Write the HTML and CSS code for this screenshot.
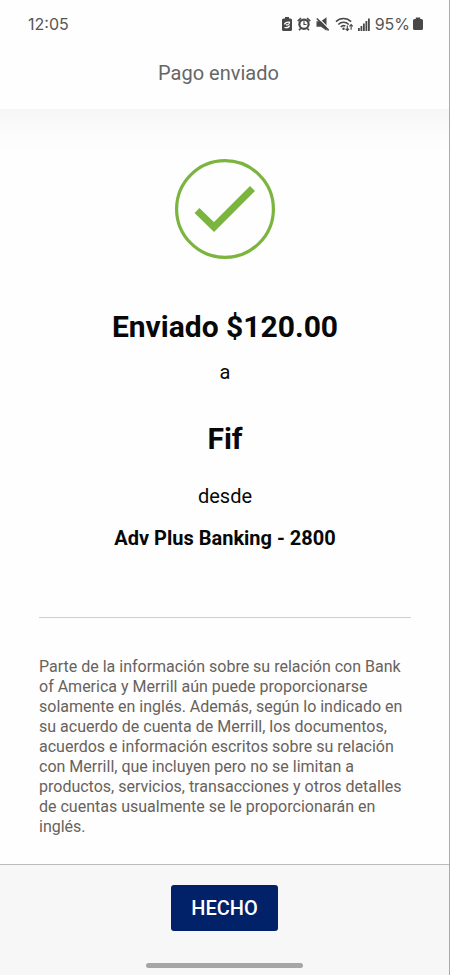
FILE: index.html
```html
<!DOCTYPE html>
<html lang="es">
<head>
<meta charset="utf-8">
<meta name="viewport" content="width=device-width, initial-scale=1">
<title>Pago enviado</title>
<link rel="stylesheet" href="styles.css">
</head>
<body>
<div class="screen">
  <div class="status">
    <time class="clock">12:05</time>
    <div class="indicators">
      <svg width="10" height="14" viewBox="0 0 10 14" aria-hidden="true"><path class="fill" d="M3 0h4v1.5h1.5A1.5 1.5 0 0 1 10 3v9.5a1.5 1.5 0 0 1-1.500 1.500h-7A1.500 1.500 0 0 1 0 12.500V3a1.500 1.500 0 0 1 1.500-1.500H3z"/><path class="cut" d="M2.500 7.500C3 5.500 5 5 7.500 5.200 7.500 7 6 8.300 4 7.800M7.500 8.500C7 10.300 5 11 2.500 10.500"/></svg>
      <svg width="14" height="14" viewBox="0 0 14 14" aria-hidden="true"><circle class="fill" cx="7" cy="7.300" r="5.700"/><path class="line" d="M.8 4.200 4 1.200M13.200 4.200 10 1.200M3.600 11.500 2 13.300M10.400 11.500 12 13.300"/><circle class="face" cx="7" cy="7.300" r="3.500"/><path class="arrow" d="M7 4.300v3.200h2.500"/></svg>
      <svg width="14" height="14" viewBox="0 0 14 14" aria-hidden="true"><path class="fill" d="M.5 4.200H5L10.500.3v13.400L5 9.800H.5z"/><path class="gap" d="M1.500.2 14 12.700"/><path class="line" d="M.8 1.500 12.700 13.400"/></svg>
      <svg width="18" height="16" viewBox="0 0 19 16" aria-hidden="true"><path class="line" d="M1 5.500C5.500 1 12.500 1 17 5.500M3.500 8.500C6.500 5.400 11.500 5.400 14.500 8.500M6 11.200C7.700 9.500 9.500 9.400 11 10.300"/><circle class="fill" cx="9" cy="13" r="1.300"/><path class="arrow" d="M13 9.500v5.300m-1.800-1.800 1.800 1.800 1.800-1.800M17 14V8.700m-1.800 1.800 1.800-1.800 1.800 1.800"/></svg>
      <svg width="12" height="13" viewBox="0 0 12 13" aria-hidden="true"><path class="fill" d="M0 10h1.800v3H0zM2.500 8h1.800v5H2.500zM5 5.500h1.800V13H5zM7.500 3h1.800v10H7.500zM10 .5h1.800V13H10z"/></svg>
      <span class="percent">95%</span>
      <svg width="10" height="14" viewBox="0 0 9 14" preserveAspectRatio="none" aria-hidden="true"><path class="fill" d="M2.500.5h4V2h1A1.500 1.500 0 0 1 9 3.500v8A1.500 1.500 0 0 1 7.500 13h-6A1.500 1.500 0 0 1 0 11.500v-8A1.500 1.500 0 0 1 1.500 2h1z"/></svg>
    </div>
  </div>
  <header class="header"><h1 class="title">Pago enviado</h1></header>
  <main class="content">
    <svg class="check" width="100" height="100" viewBox="0 0 100 100" role="img" aria-label="Enviado"><circle cx="50" cy="50" r="48.400"/><path d="m22 51.500 17 16.500L77.500 29.500"/></svg>
    <p class="amount">Enviado $120.00</p>
    <p class="word">a</p>
    <p class="recipient">Fif</p>
    <p class="word">desde</p>
    <p class="account">Adv Plus Banking - 2800</p>
    <hr class="rule">
    <p class="notice">Parte de la información sobre su relación con Bank<br>of America y Merrill aún puede proporcionarse<br>solamente en inglés. Además, según lo indicado en<br>su acuerdo de cuenta de Merrill, los documentos,<br>acuerdos e información escritos sobre su relación<br>con Merrill, que incluyen pero no se limitan a<br>productos, servicios, transacciones y otros detalles<br>de cuentas usualmente se le proporcionarán en<br>inglés.</p>
  </main>
  <footer class="footer">
    <button class="done" type="button">HECHO</button>
    <div class="handle"></div>
  </footer>
</div>
</body>
</html>
```
FILE: styles.css
```css
* { box-sizing: border-box; }
body {
  margin: 0;
  background: #fefefe;
  color: #080808;
  font-family: Roboto, "Liberation Sans", sans-serif;
}
h1, p { margin: 0; }
.screen {
  min-height: 100vh;
  display: flex;
  flex-direction: column;
  border-right: 1px solid #aaa;
}
.status {
  display: flex;
  align-items: center;
  justify-content: space-between;
  height: 48px;
  padding: 0 26px 0 28px;
  color: #555;
  font-family: Inter, sans-serif;
  font-size: 16px;
}
.indicators {
  display: flex;
  align-items: center;
  gap: 5px;
}
.percent { margin-right: -2px; }
.fill { fill: #484848; }
.line { fill: none; stroke: #484848; stroke-width: 1.6; }
.arrow { fill: none; stroke: #484848; stroke-width: 1.2; }
.cut { fill: none; stroke: #fefefe; stroke-width: 1.2; }
.face { fill: #fefefe; }
.gap { fill: none; stroke: #fefefe; stroke-width: 1.2; }
.header {
  height: 61px;
  padding: 11px 12px 0 0;
  text-align: center;
}
.title {
  color: #666;
  font-size: 20px;
  font-weight: 400;
  line-height: 28px;
}
.content {
  flex: 1;
  display: flex;
  flex-direction: column;
  align-items: center;
  padding: 50px 38px 24px 39px;
  background: linear-gradient(#f5f5f5, #fafafa 16px, #fefefe 44px);
  text-align: center;
}
.check { fill: none; stroke: #7cb440; }
.check circle { stroke-width: 3.2; }
.check path { stroke-width: 7; }
.amount, .recipient {
  font-size: 30px;
  font-weight: 700;
  line-height: 36px;
}
.amount { margin-top: 50px; }
.word {
  font-size: 20px;
  line-height: 28px;
}
.amount + .word { margin-top: 13px; }
.recipient { margin-top: 35px; }
.recipient + .word { margin-top: 25px; }
.account {
  margin-top: 14px;
  font-size: 20px;
  font-weight: 700;
  line-height: 28px;
}
.rule {
  width: 100%;
  height: 1px;
  margin: 65px 0 39px;
  border: 0;
  background: #d0d0d0;
}
.notice {
  align-self: stretch;
  color: #67625c;
  font-size: 16px;
  line-height: 20px;
  text-align: left;
  white-space: nowrap;
}
.footer {
  display: flex;
  flex-direction: column;
  align-items: center;
  padding: 20px 0 7px;
  border-top: 1px solid #bbb;
  background: #f7f7f8;
}
.done {
  padding: 10px 20px;
  border: 0;
  border-radius: 3px;
  background: #012169;
  color: #fff;
  font: 500 20px/26px Roboto, "Liberation Sans", sans-serif;
}
.handle {
  width: 35%;
  height: 5px;
  margin-top: 32px;
  border-radius: 3px;
  background: #a6a6a8;
}
```
